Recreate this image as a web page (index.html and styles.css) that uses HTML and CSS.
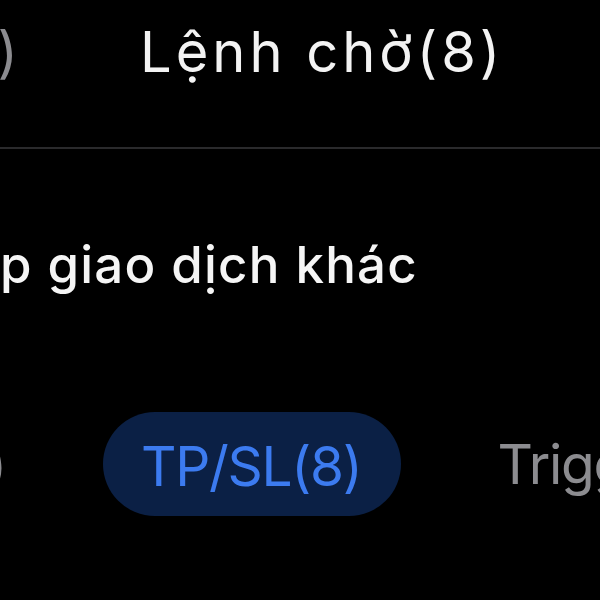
FILE: index.html
```html
<!DOCTYPE html>
<html lang="vi">
<head>
<meta charset="utf-8">
<link rel="stylesheet" href="styles.css">
</head>
<body>
<div class="screen">
  <nav class="tabs">
    <div class="edge"><span class="tab muted">Vị thế(8)</span></div>
    <span class="tab active">Lệnh chờ(8)</span>
  </nav>
  <div class="divider"></div>
  <div class="filter">
    <div class="edge-text"><span>Ẩn các cặ</span></div>p giao dịch khác
  </div>
  <div class="chips">
    <div class="edge-chip"><span class="chip muted">Giới hạn(0)</span></div>
    <span class="chip selected">TP/SL(8)</span>
    <span class="chip muted">Trigger(0)</span>
  </div>
</div>
</body>
</html>
```
FILE: styles.css
```css
html, body {
  margin: 0;
  padding: 0;
  background: #000;
}
.screen {
  width: 600px;
  height: 600px;
  overflow: hidden;
  background: #000;
  font-family: Inter, "Noto Sans", sans-serif;
  color: #f2f2f2;
}
.tabs {
  display: flex;
  align-items: center;
  gap: 118px;
  height: 147px;
  white-space: nowrap;
}
.edge {
  width: 22px;
  flex: none;
  display: flex;
  justify-content: flex-end;
}
.tab {
  font-size: 56px;
  font-weight: 400;
  letter-spacing: 4px;
  line-height: 1;
  margin-top: -44px;
}
.muted { color: #8c8c90; }
.active { color: #f3f3f3; }
.divider {
  height: 2px;
  background: #2a2a2c;
}
.filter {
  display: flex;
  white-space: nowrap;
  font-size: 51px;
  font-weight: 500;
  letter-spacing: 1.2px;
  line-height: 1;
  padding-top: 90px;
  color: #f5f5f5;
}
.edge-text {
  width: 0;
  display: flex;
  justify-content: flex-end;
}
.chips {
  display: flex;
  align-items: center;
  gap: 97px;
  white-space: nowrap;
  margin-top: 122px;
}
.edge-chip {
  width: 6px;
  flex: none;
  display: flex;
  justify-content: flex-end;
}
.chip {
  font-size: 55px;
  font-weight: 400;
  letter-spacing: -1.3px;
  line-height: 1;
}
.chip.selected {
  color: #3c7bf0;
  background: #0b2045;
  border-radius: 52px;
  padding: 27px 39px 22px 38px;
}
```
